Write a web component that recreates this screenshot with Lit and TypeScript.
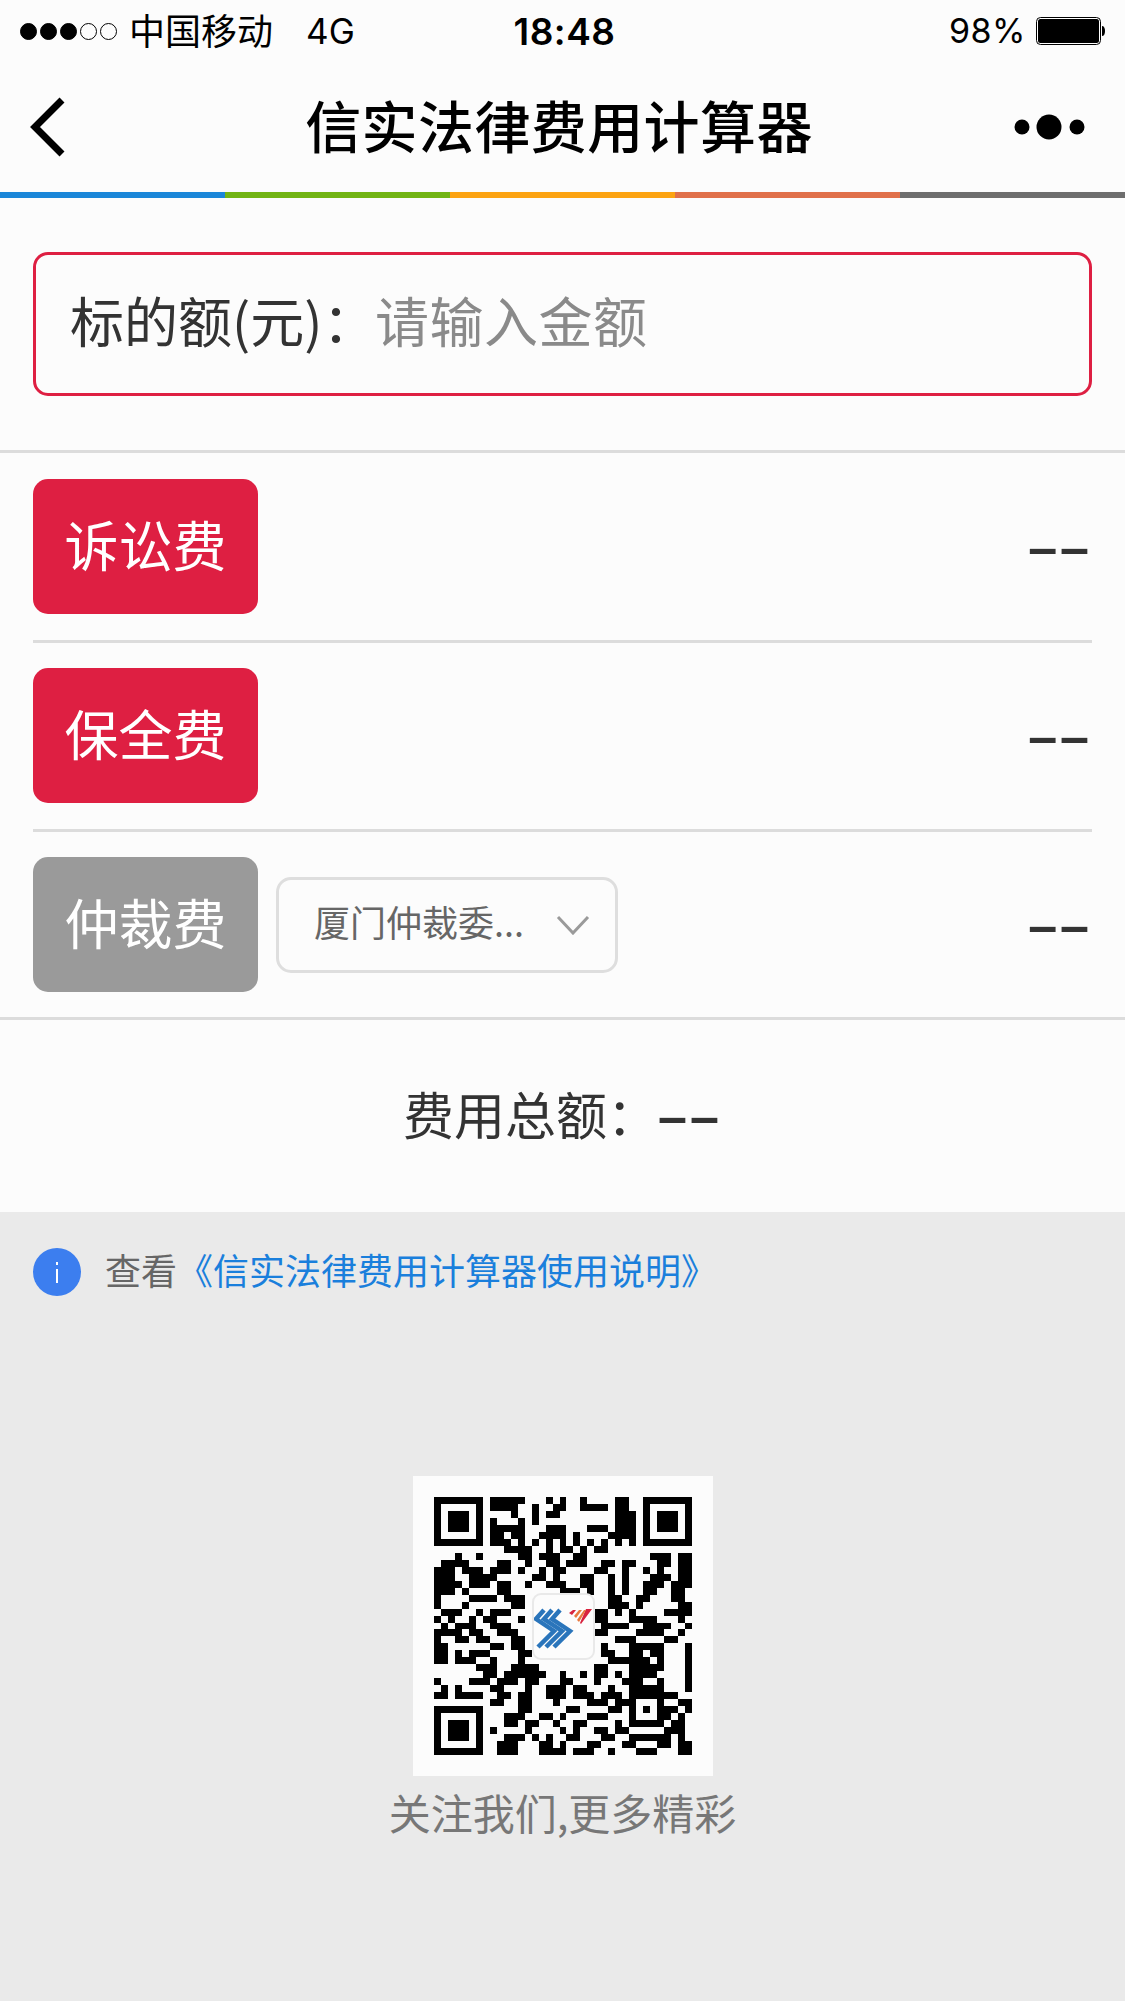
import { LitElement, html, css, svg } from 'lit';
import { customElement, state } from 'lit/decorators.js';

const COLON = '\uFF1A';

const BAR_COLORS = ['#1a86d8', '#72b414', '#fca311', '#e0704a', '#6e6e6e'];

const FEES = [
  { key: 'lawsuit', label: '诉讼费', active: true, agency: false },
  { key: 'preserve', label: '保全费', active: true, agency: false },
  { key: 'arbitration', label: '仲裁费', active: false, agency: true },
];

// black runs per row, finder and alignment patterns are added in qrPath()
const QR_ROWS = [
  '8-12 16 18 21 26-27',
  '8-11 14 17-18 21-24 26-27',
  '11 14 16-17 26-28',
  '8 12 14 26-28',
  '8-12 16-18 22-24 26-28',
  '8-9 11-12 15-18 20 25-28',
  '8-10 12 14 16 18 20 22 24 26 28',
  '10-13 16 18-19 21 23-24',
  '3 6 12-13 15-17 20-21 31-33 35-36',
  '1-4 9-10 13 16-17 19-21 24-25 27-28 32-33 35-36',
  '0-2 4-6 8-10 12 15 17-18 23-24 27 30 32 35-36',
  '0-2 5-8 14-15 17 21-22 25 27 31-33 35-36',
  '0-3 5-7 9-10 13 16-18 21-22 25 27 30-32 34-36',
  '0-2 4 9-10 18-20 22 25 27 30-31 34-35',
  '0 5-8 10-12 25-26 29-30 34-35',
  '0 4 11-12 25-27 29 35-36',
  '1-3 6 8-10 23-24 26 28 33-36',
  '0 2 5 7-8 12 23-24 28-31 35',
  '1 3-5 8-10 24-27 30-33 36',
  '0-3 5-6 9-11 23-24 29-32 35',
  '0 3-4 6-7 11-12 26-28 33-34',
  '0-1 8-9 11-12 24 28-32 36',
  '0-1 3 5-7 12-13 24-25 28-29 31-32 36',
  '0-1 3-5 8 12 25-26 27-30 32 36',
  '6-8 11-14 23-24 28-32 36',
  '7-8 10-15 18 21 23-24 26 28-31 36',
  '0 5-7 9-11 13-14 18-19 23 27-29 32 36',
  '1 3 8-9 13 16-18 20-21 25 28-32 36',
  '0-1 3-6 9-10 12-13 16-18 20-22 24-26 33-34',
  '8-9 12-13 17 22-24 26-27 35-36',
  '12-13 19-20 25-26 33-34 36',
  '10-12 15-16 18 22-24 33 35',
  '10-11 13-14 17 20-21 26 34-35',
  '8 13 18 20 23-24 26-27 33-35',
  '10-12 14 16 19-20 24-25 28-33 35',
  '9-11 15-16 18 22-23 27-28 32-33 35-36',
  '9-11 15-18 20-22 25 29-31 35-36',
];

function qrPath() {
  let d = '';
  QR_ROWS.forEach((row, y) => {
    row.split(' ').forEach(run => {
      const [a, b] = run.split('-').map(Number);
      d += `M${a} ${y}h${(b ?? a) - a + 1}v1h-${(b ?? a) - a + 1}z`;
    });
  });
  const ring = (x: number, y: number, n: number) => {
    d += `M${x} ${y}h${n}v${n}h-${n}zM${x + 1} ${y + 1}v${n - 2}h${n - 2}v-${n - 2}z`;
    d += `M${x + 2} ${y + 2}h${n - 4}v${n - 4}h-${n - 4}z`;
  };
  ring(0, 0, 7);
  ring(30, 0, 7);
  ring(0, 30, 7);
  ring(28, 28, 5);
  return d;
}

@customElement('app-root')
export class AppRoot extends LitElement {
  @state() amount = '';

  static styles = css`
    :host {
      display: block;
      width: 1125px;
      height: 2001px;
      overflow: hidden;
      background: #eaeaea;
      font-family: "Noto Sans CJK SC", "Noto Sans", sans-serif;
      color: #333;
    }
    .top {
      background: #fcfcfc;
    }
    .status {
      height: 62px;
      display: grid;
      grid-template-columns: 1fr auto 1fr;
      align-items: center;
      padding: 0 20px;
      color: #000;
      font-size: 36px;
      line-height: 1;
    }
    .status-left,
    .status-right {
      display: flex;
      align-items: center;
    }
    .status-right {
      justify-content: flex-end;
    }
    .signal {
      display: flex;
      gap: 3px;
      margin-right: 12px;
    }
    .signal i {
      width: 17px;
      height: 17px;
      box-sizing: border-box;
      border-radius: 50%;
      border: 1px solid #000;
    }
    .signal i.on {
      background: #000;
    }
    .carrier {
      padding-bottom: 5px;
    }
    .net {
      margin-left: 33px;
      font-family: Inter, sans-serif;
      font-size: 35px;
    }
    .time {
      font-family: Inter, sans-serif;
      font-weight: 600;
      font-size: 37px;
      letter-spacing: 0.5px;
      margin-left: 4px;
    }
    .pct {
      font-family: Inter, sans-serif;
      font-size: 34px;
      letter-spacing: 0.5px;
      margin-right: 10px;
    }
    .battery {
      display: block;
    }
    .nav {
      height: 130px;
      display: grid;
      grid-template-columns: 1fr auto 1fr;
      align-items: center;
      padding: 0 39px 0 28px;
      color: #000;
    }
    .nav h1 {
      margin: 0 0 0 4px;
      padding-bottom: 6px;
      font-size: 56px;
      letter-spacing: 0.4px;
      font-weight: 500;
      line-height: 1;
    }
    .nav .more {
      justify-self: end;
    }
    .nav svg {
      display: block;
    }
    .bar {
      display: flex;
      height: 6px;
    }
    .bar span {
      flex: 1;
    }
    .form {
      background: #fcfcfc;
      padding: 54px 0 0;
    }
    .amount {
      display: flex;
      align-items: center;
      height: 144px;
      box-sizing: border-box;
      margin: 0 33px;
      padding: 0 34px 10px;
      border: 3px solid #de1f42;
      border-radius: 15px;
      font-size: 54px;
    }
    .amount label {
      white-space: nowrap;
      width: 305px;
      flex: none;
    }
    .amount input {
      flex: 1;
      min-width: 0;
      border: 0;
      padding: 0;
      outline: 0;
      background: transparent;
      font: inherit;
      letter-spacing: 0.5px;
      color: #333;
    }
    .amount input::placeholder {
      color: #8a8a8a;
      opacity: 1;
    }
    .fees {
      margin-top: 54px;
      border-top: 3px solid #dcdcdc;
      border-bottom: 3px solid #dcdcdc;
      padding: 1px 33px 0;
    }
    .fee {
      display: flex;
      align-items: center;
      padding: 25px 0 26px;
      border-bottom: 3px solid #dcdcdc;
    }
    .fee:last-child {
      border-bottom: 0;
      padding-bottom: 25px;
    }
    .tag {
      width: 225px;
      height: 135px;
      box-sizing: border-box;
      padding-bottom: 7px;
      flex: none;
      display: flex;
      align-items: center;
      justify-content: center;
      border-radius: 15px;
      background: #9a9a9a;
      color: #fff;
      font-size: 54px;
    }
    .tag.on {
      background: #de1f42;
    }
    .agency {
      width: 342px;
      height: 96px;
      box-sizing: border-box;
      margin-left: 18px;
      padding: 0 25px 0 35px;
      display: flex;
      align-items: center;
      justify-content: space-between;
      border: 3px solid #dedede;
      border-radius: 15px;
      color: #666;
      font-size: 36px;
    }
    .agency span {
      padding-bottom: 7px;
    }
    .value {
      margin-left: auto;
      font-family: "Liberation Sans", sans-serif;
      font-size: 52px;
      font-weight: 700;
      letter-spacing: 3px;
      line-height: 1;
    }
    .total {
      height: 192px;
      display: flex;
      align-items: center;
      justify-content: center;
      font-size: 51px;
    }
    .total .label {
      padding-bottom: 6px;
    }
    .total .dash {
      font-family: "Liberation Sans", sans-serif;
      font-size: 52px;
      font-weight: 700;
      letter-spacing: 3px;
      line-height: 1;
    }
    .info {
      display: flex;
      align-items: center;
      gap: 24px;
      padding: 33px 33px 0;
      font-size: 36px;
      line-height: 48px;
      color: #666;
    }
    .info span {
      padding-bottom: 5px;
    }
    .info a {
      color: #1a7fdc;
      text-decoration: none;
    }
    .info svg {
      display: block;
      flex: none;
    }
    .follow {
      display: flex;
      flex-direction: column;
      align-items: center;
      margin-top: 178px;
    }
    .qr {
      position: relative;
      width: 300px;
      height: 300px;
      box-sizing: border-box;
      padding: 21px;
      background: #fcfcfc;
    }
    .qr > svg {
      display: block;
      filter: blur(0.6px);
    }
    .logo {
      position: absolute;
      left: 119px;
      top: 117px;
      width: 63px;
      height: 67px;
      box-sizing: border-box;
      background: #fcfcfc;
      border: 2px solid #e9e9e9;
      border-radius: 9px;
    }
    .logo svg {
      display: block;
    }
    .follow p {
      margin: 8px 0 0;
      font-size: 42px;
      line-height: 56px;
      color: #777;
    }
  `;

  render() {
    return html`
      <div class="top">
        ${this.renderStatus()}
        <div class="nav">
          <svg width="42" height="60" viewBox="0 0 42 60">
            <path d="M34 3 7 30l27 27" fill="none" stroke="#000" stroke-width="7"></path>
          </svg>
          <h1>信实法律费用计算器</h1>
          <svg class="more" width="72" height="26" viewBox="0 0 72 26">
            <circle cx="8" cy="13" r="7.5"></circle>
            <circle cx="35" cy="13" r="12.5"></circle>
            <circle cx="63" cy="13" r="7.5"></circle>
          </svg>
        </div>
        <div class="bar">
          ${BAR_COLORS.map(c => html`<span style="background:${c}"></span>`)}
        </div>
      </div>
      <div class="form">
        <div class="amount">
          <label>标的额(元)${COLON}</label>
          <input
            placeholder="请输入金额"
            .value=${this.amount}
            @input=${(e: Event) => (this.amount = (e.target as HTMLInputElement).value)}
          />
        </div>
        <div class="fees">
          ${FEES.map(f => html`
            <div class="fee">
              <div class="tag ${f.active ? 'on' : ''}">${f.label}</div>
              ${f.agency ? this.renderAgency() : ''}
              <div class="value">––</div>
            </div>
          `)}
        </div>
        <div class="total"><span class="label">费用总额${COLON}</span><span class="dash">––</span></div>
      </div>
      <div class="info">
        <svg width="48" height="48" viewBox="0 0 48 48">
          <circle cx="24" cy="24" r="24" fill="#3c7eef"></circle>
          <path d="M24 21v14M24 14v3" stroke="#fff" stroke-width="2"></path>
        </svg>
        <span>查看<a href="#">《信实法律费用计算器使用说明》</a></span>
      </div>
      <div class="follow">
        <div class="qr">
          <svg width="258" height="258" viewBox="0 0 37 37" shape-rendering="crispEdges">
            <path d=${qrPath()} fill="#000" fill-rule="evenodd"></path>
          </svg>
          <div class="logo">${this.renderLogo()}</div>
        </div>
        <p>关注我们,更多精彩</p>
      </div>
    `;
  }

  private renderStatus() {
    return html`
      <div class="status">
        <div class="status-left">
          <div class="signal">
            ${[1, 1, 1, 0, 0].map(on => html`<i class=${on ? 'on' : ''}></i>`)}
          </div>
          <span class="carrier">中国移动</span>
          <span class="net">4G</span>
        </div>
        <div class="time">18:48</div>
        <div class="status-right">
          <span class="pct">98%</span>
          <svg class="battery" width="69" height="28" viewBox="0 0 69 28">
            <rect x="0.5" y="0.5" width="64" height="27" rx="4" fill="#fff" stroke="#000"></rect>
            <rect x="2" y="2" width="61" height="24" rx="2.5" fill="#000"></rect>
            <path d="M66 9c2 0 3 2 3 5s-1 5-3 5z" fill="#000"></path>
          </svg>
        </div>
      </div>
    `;
  }

  private renderAgency() {
    return html`
      <div class="agency">
        <span>厦门仲裁委...</span>
        <svg width="34" height="20" viewBox="0 0 34 20">
          <path d="M2 2l15 16L32 2" fill="none" stroke="#9a9a9a" stroke-width="3"></path>
        </svg>
      </div>
    `;
  }

  private renderLogo() {
    const arrow = [0, 8, 16].map(dx => svg`
      <path d="M${10 + dx} 15 ${2 + dx} 24l18 12-16 16" fill="none" stroke="#2a75bb" stroke-width="4.5"></path>
    `);
    return html`
      <svg width="59" height="63" viewBox="0 0 59 63">
        ${arrow}
        <path d="M35 18l4-3h3l-4 5zM52 14h6l-11 15-1-1z" fill="#d8233f"></path>
        <path d="M40 21l5-6h3l-6 8zM43 25l7-10h2l-7 12z" fill="#e8793e"></path>
      </svg>
    `;
  }
}
